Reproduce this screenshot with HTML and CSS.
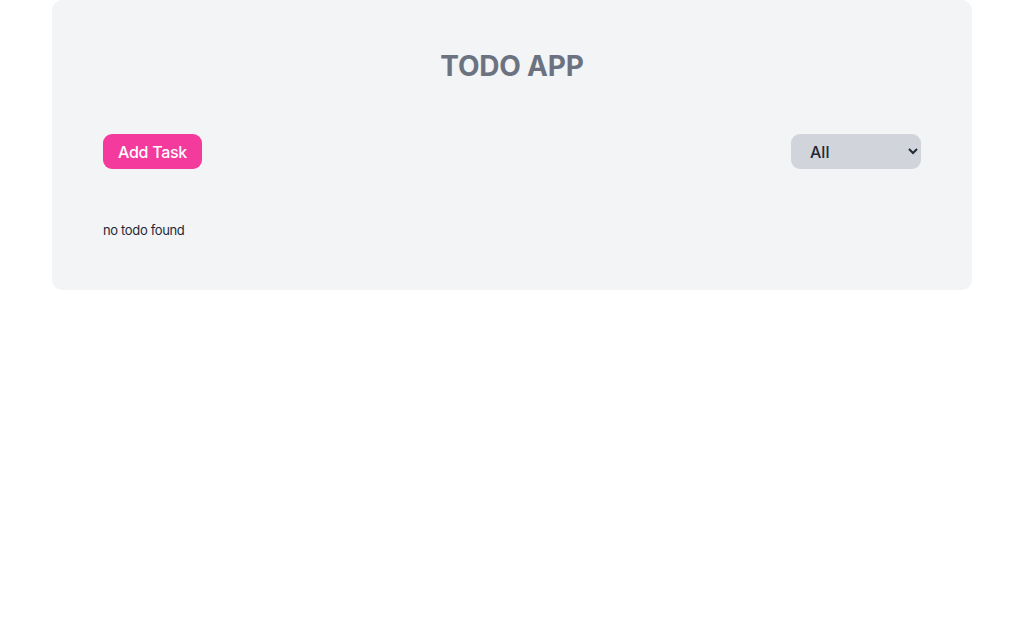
FILE: index.html
```html
<!DOCTYPE html>
<html lang="en">
<head>
<meta charset="utf-8">
<title>Todo App</title>
<link rel="stylesheet" href="styles.css">
</head>
<body>
  <main class="card">
    <h1 class="title">TODO APP</h1>
    <div class="toolbar">
      <button class="add-btn" type="button">Add Task</button>
      <select class="filter">
        <option>All</option>
        <option>Incomplete</option>
        <option>Completed</option>
      </select>
    </div>
    <p class="empty">no todo found</p>
  </main>
</body>
</html>
```
FILE: styles.css
```css
* { box-sizing: border-box; }
html, body { margin: 0; padding: 0; background: #ffffff; }
body { font-family: Inter, "Noto Sans", Arial, sans-serif; }

.card {
  width: 920px;
  margin: 0 auto;
  background: #f3f4f6;
  border-radius: 10px;
  padding: 48px 51px 50px;
}

.title {
  margin: 0;
  text-align: center;
  font-size: 28px;
  line-height: 36px;
  font-weight: 700;
  letter-spacing: -0.2px;
  color: #6b7280;
}

.toolbar {
  margin-top: 50px;
  display: flex;
  justify-content: space-between;
  align-items: center;
}

.add-btn {
  width: 99px;
  height: 35px;
  padding: 0;
  border: none;
  border-radius: 9px;
  background: #f43a9c;
  color: #ffffff;
  font-family: inherit;
  font-size: 16px;
  font-weight: 500;
  letter-spacing: -0.3px;
}

.filter {
  width: 130px;
  height: 35px;
  padding: 0 4px 0 15px;
  border: none;
  border-radius: 9px;
  background-color: #d1d5db;
  color: #1f2937;
  font-family: inherit;
  font-size: 16px;
  font-weight: 500;
}

.empty {
  margin: 51px 0 0;
  font-size: 13px;
  line-height: 20px;
  letter-spacing: -0.35px;
  color: #1f2937;
}
```
